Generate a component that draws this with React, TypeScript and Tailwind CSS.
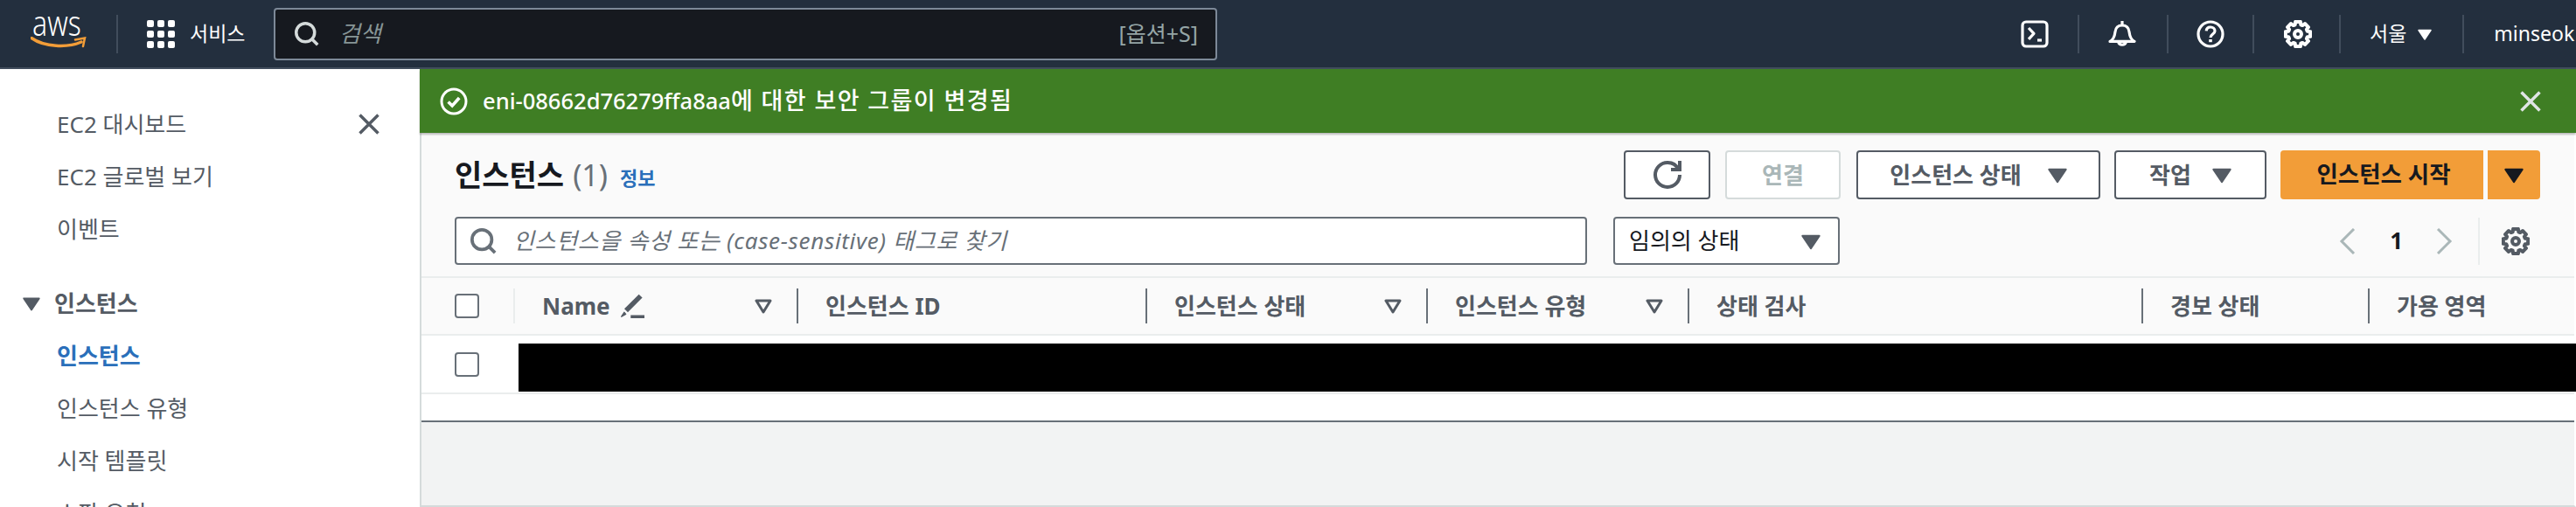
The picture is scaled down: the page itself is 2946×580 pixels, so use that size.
import type { ReactNode } from 'react';

const gearPath = (() => {
  // 8 chunky teeth round a 16 unit box
  const pts: string[] = [];
  for (let i = 0; i < 8; i++) {
    const a = (i * Math.PI) / 4 - Math.PI / 2;
    const step = [[-0.3, 5.6], [-0.2, 7.2], [0.2, 7.2], [0.3, 5.6]];
    step.forEach(([d, r]) => {
      pts.push(`${(8 + r * Math.cos(a + d)).toFixed(2)},${(8 + r * Math.sin(a + d)).toFixed(2)}`);
    });
  }
  return pts.join(' ');
})();

const Gear = ({ className }: { className: string }) => (
  <svg viewBox="0 0 16 16" className={className} fill="none" stroke="currentColor" strokeWidth="2" strokeLinejoin="round">
    <polygon points={gearPath} />
    <circle cx="8" cy="8" r="2" />
  </svg>
);

const Caret = ({ className }: { className: string }) => (
  <svg viewBox="0 0 16 16" className={className} fill="currentColor" stroke="currentColor" strokeWidth="1.5" strokeLinejoin="round">
    <polygon points="1,3.5 15,3.5 8,14" />
  </svg>
);

const SortCaret = () => (
  <svg viewBox="0 0 20 17" className="ml-auto mr-[28px] h-[17px] w-[20px] text-[#545b64]" fill="none" stroke="currentColor" strokeWidth="3" strokeLinejoin="round">
    <polygon points="2,2 18,2 10,15" />
  </svg>
);

const SearchIcon = ({ className }: { className: string }) => (
  <svg viewBox="0 0 16 16" className={className} fill="none" stroke="currentColor" strokeWidth="2">
    <circle cx="7" cy="7" r="6" />
    <path d="m11 11 4 4" />
  </svg>
);

const CloseIcon = ({ className }: { className: string }) => (
  <svg viewBox="0 0 16 16" className={className} fill="none" stroke="currentColor" strokeWidth="2">
    <path d="m2 2 12 12M14 2 2 14" />
  </svg>
);

const Checkbox = () => <div className="h-[28px] w-[28px] rounded-[4px] border-2 border-[#687078] bg-white" />;

const HeadDivider = ({ light }: { light?: boolean }) => (
  <div className={`h-[40px] w-[2px] shrink-0 ${light ? 'bg-[#eaeded]' : 'bg-[#687078]'}`} />
);

const HeadCell = ({ width, label, sort, light, children }: { width: string; label: string; sort?: boolean; light?: boolean; children?: ReactNode }) => (
  <div className={`flex h-full shrink-0 items-center ${width}`}>
    <HeadDivider light={light} />
    <span className="ml-[31px] whitespace-nowrap text-[26px] font-bold text-[#545b64]">{label}</span>
    {children}
    {sort && <SortCaret />}
  </div>
);

const NavItem = ({ label, active }: { label: string; active?: boolean }) => (
  <div className={`flex h-[60px] shrink-0 items-center pl-[65px] text-[26px] whitespace-nowrap ${active ? 'font-bold text-[#2a6fba]' : 'text-[#545b64]'}`}>
    {label}
  </div>
);

const HeaderDivider = () => <div className="h-[44px] w-[2px] shrink-0 bg-[#414d5c]" />;

const OutlineButton = ({ width, children }: { width: string; children: ReactNode }) => (
  <button className={`flex h-[56px] shrink-0 items-center justify-center rounded-[4px] border-2 border-[#545b64] bg-white text-[26px] font-bold text-[#545b64] ${width}`}>
    {children}
  </button>
);

export default function App() {
  return (
    <div className="flex h-[580px] w-[2946px] flex-col overflow-hidden bg-white font-['Noto_Sans','Noto_Sans_CJK_KR',sans-serif]">
      {/* Top nav */}
      <header className="flex h-[79px] shrink-0 items-center border-b-2 border-[#414d5c] bg-[#232f3e] text-white">
        <div className="flex h-full w-[133px] shrink-0 flex-col pl-[35px] pt-[9px]">
          <span className="ml-[2px] h-[33px] origin-left scale-x-[0.8] text-[40px] leading-[33px] font-light">aws</span>
          <svg viewBox="0 0 64 15" className="h-[15px] w-[64px]" fill="none" stroke="#f29d38" strokeLinecap="round">
            <path d="M1 1.500C16 12 42 13 58 6" strokeWidth="3.500" />
            <path d="M51 3.500 62 1.500 60 11" strokeWidth="2.500" />
          </svg>
        </div>
        <HeaderDivider />
        <div className="ml-[33px] grid h-[32px] w-[32px] shrink-0 grid-cols-3 gap-[4px]">
          {Array.from({ length: 9 }).map((_, i) => (
            <span key={i} className="rounded-[2px] bg-white" />
          ))}
        </div>
        <span className="ml-[17px] w-[61px] shrink-0 text-[23px] whitespace-nowrap">서비스</span>
        <div className="ml-[35px] flex h-[60px] w-[1079px] shrink-0 items-center rounded-[4px] border-2 border-[#7d8998] bg-[#16191f] pl-[22px] pr-[20px]">
          <SearchIcon className="h-[28px] w-[28px] text-[#d5dbdb]" />
          <span className="ml-[23px] text-[26px] text-[#879596] italic">검색</span>
          <span className="ml-auto text-[25px] text-[#95a5a6]">[옵션+S]</span>
        </div>
        <div className="ml-auto flex h-full w-[635px] shrink-0 items-center [&>*]:shrink-0">
          <svg viewBox="0 0 16 16" className="h-[32px] w-[32px]" fill="none" stroke="currentColor" strokeWidth="1.6" strokeLinejoin="round">
            <rect x="1" y="1" width="14" height="14" rx="2" />
            <path d="m4.500 4.500 3 3.200-3 3.200" />
            <path d="M9.500 11.500h2.500" />
          </svg>
          <div className="ml-[33px]"><HeaderDivider /></div>
          <svg viewBox="0 0 16 16" className="ml-[33px] h-[32px] w-[32px]" fill="none" stroke="currentColor" strokeWidth="1.6" strokeLinejoin="round">
            <path d="M1 12.200c2.200-1 2.700-3 3-5.500C4.300 4 6 3 8 3s3.700 1 4 3.700c.3 2.500.8 4.500 3 5.500z" />
            <path d="M8 .5V3" />
            <path d="M5.800 12.500a2.300 2.300 0 0 0 4.400 0" />
          </svg>
          <div className="ml-[35px]"><HeaderDivider /></div>
          <svg viewBox="0 0 16 16" className="ml-[32px] h-[32px] w-[32px]" fill="none" stroke="currentColor" strokeWidth="1.6">
            <circle cx="8" cy="8" r="7" />
            <path d="M5.600 6.200C5.700 4.800 6.700 4 8 4s2.500.9 2.500 2.200C10.500 8 8 8 8 10" />
            <path d="M8 11v1.600" strokeWidth="1.800" />
          </svg>
          <div className="ml-[32px]"><HeaderDivider /></div>
          <Gear className="ml-[34px] h-[32px] w-[32px]" />
          <div className="ml-[31px]"><HeaderDivider /></div>
          <span className="ml-[33px] text-[23px] whitespace-nowrap">서울</span>
          <Caret className="ml-[13px] h-[16px] w-[16px]" />
          <div className="ml-[35px]"><HeaderDivider /></div>
          <span className="ml-[34px] text-[23px] whitespace-nowrap">minseok</span>
        </div>
      </header>

      <div className="flex min-h-0 flex-1">
        {/* Side nav */}
        <aside className="flex w-[480px] shrink-0 flex-col bg-white pt-[33px]">
          <div className="flex items-center">
            <NavItem label="EC2 대시보드" />
            <CloseIcon className="ml-auto mr-[44px] h-[28px] w-[28px] text-[#545b64]" />
          </div>
          <NavItem label="EC2 글로벌 보기" />
          <NavItem label="이벤트" />
          <div className="mt-[25px] flex h-[60px] shrink-0 items-center pl-[26px] text-[26px] font-bold text-[#545b64]">
            <Caret className="h-[20px] w-[20px]" />
            <span className="ml-[16px]">인스턴스</span>
          </div>
          <NavItem label="인스턴스" active />
          <NavItem label="인스턴스 유형" />
          <NavItem label="시작 템플릿" />
          <NavItem label="스팟 요청" />
        </aside>

        {/* Content */}
        <main className="flex min-w-0 flex-1 flex-col">
          <div className="z-10 flex h-[73px] shrink-0 items-center bg-[#3f7e24] pl-[23px] pr-[38px] text-white shadow-[0_2px_2px_rgba(0,0,0,0.25)]">
            <svg viewBox="0 0 16 16" className="h-[32px] w-[32px]" fill="none" stroke="currentColor" strokeWidth="1.5">
              <circle cx="8" cy="8" r="7" />
              <path d="m4.800 8.200 2.300 2.300 4-4.500" strokeWidth="1.800" />
            </svg>
            <span className="ml-[17px] text-[25.5px] font-medium whitespace-nowrap">
              eni-08662d76279ffa8aa<span className="text-[27px] tracking-[1.4px]">에 대한 보안 그룹이 변경됨</span>
            </span>
            <CloseIcon className="ml-auto h-[28px] w-[28px] text-[#dfe5e5]" />
          </div>

          <div className="flex min-h-0 flex-1 flex-col border-b-2 border-l-2 border-r-2 border-[#d5dbdb] border-r-white bg-[#f2f3f3]">
            <section className="shrink-0 border-b-2 border-[#687078] bg-[#fafafa]">
              <div className="pl-[38px] pr-[39px] pt-[20px]">
                <div className="flex h-[56px] items-center">
                  <h1 className="text-[34px] font-bold whitespace-nowrap text-[#16191f]">인스턴스</h1>
                  <span className="ml-[10px] text-[34px] text-[#687078]">(1)</span>
                  <span className="ml-[14px] mt-[6px] text-[22px] font-bold text-[#2a6fba]">정보</span>
                  <OutlineButton width="ml-auto w-[99px]">
                    <svg viewBox="0 0 16 16" className="h-[32px] w-[32px]" fill="none" stroke="currentColor" strokeWidth="2">
                      <path d="M10 5h5V0" />
                      <path d="M15 8a6.957 6.957 0 0 1-7 7 6.957 6.957 0 0 1-7-7 6.957 6.957 0 0 1 7-7 6.870 6.870 0 0 1 6.300 4" />
                    </svg>
                  </OutlineButton>
                  <button className="ml-[17px] h-[56px] w-[132px] shrink-0 rounded-[4px] border-2 border-[#d5dbdb] bg-white text-[26px] font-bold text-[#aab7b8]">연결</button>
                  <OutlineButton width="ml-[18px] w-[279px]">
                    <span>인스턴스 상태</span>
                    <Caret className="ml-[30px] h-[22px] w-[22px]" />
                  </OutlineButton>
                  <OutlineButton width="ml-[16px] w-[174px]">
                    <span>작업</span>
                    <Caret className="ml-[24px] h-[22px] w-[22px]" />
                  </OutlineButton>
                  <button className="ml-[16px] h-[56px] w-[232px] shrink-0 rounded-l-[4px] bg-[#f29d38] pl-[4px] text-[26.500px] font-bold text-[#16191f]">인스턴스 시작</button>
                  <button className="ml-[5px] flex h-[56px] w-[60px] shrink-0 items-center justify-center rounded-r-[4px] bg-[#f29d38] text-[#16191f]">
                    <Caret className="h-[22px] w-[22px]" />
                  </button>
                </div>
                <div className="mt-[20px] flex h-[55px] items-center">
                  <div className="flex h-full w-[1295px] shrink-0 items-center rounded-[4px] border-2 border-[#687078] bg-white pl-[16px]">
                    <SearchIcon className="h-[30px] w-[30px] text-[#687078]" />
                    <span className="ml-[19px] text-[26px] tracking-[0.7px] whitespace-nowrap text-[#687078] italic">인스턴스을 속성 또는 (case-sensitive) 태그로 찾기</span>
                  </div>
                  <div className="ml-[30px] flex h-full w-[259px] shrink-0 items-center rounded-[4px] border-2 border-[#687078] bg-white pl-[16px] pr-[20px]">
                    <span className="text-[26px] whitespace-nowrap text-[#16191f]">임의의 상태</span>
                    <Caret className="ml-auto h-[22px] w-[22px] text-[#545b64]" />
                  </div>
                  <div className="ml-auto mr-[12px] flex h-full items-center">
                    <svg viewBox="0 0 19 30" className="h-[30px] w-[19px] text-[#aab7b8]" fill="none" stroke="currentColor" strokeWidth="3">
                      <path d="M17 1 3 15l14 14" />
                    </svg>
                    <span className="ml-[39px] text-[26px] font-bold text-[#16191f]">1</span>
                    <svg viewBox="0 0 19 30" className="ml-[38px] h-[30px] w-[19px] text-[#aab7b8]" fill="none" stroke="currentColor" strokeWidth="3">
                      <path d="m2 1 14 14L2 29" />
                    </svg>
                    <div className="ml-[29px] h-[54px] w-[2px] bg-[#eaeded]" />
                    <Gear className="ml-[25px] h-[32px] w-[32px] text-[#545b64]" />
                  </div>
                </div>
              </div>

              {/* Table */}
              <div className="mt-[13px] flex h-[68px] items-center border-y-2 border-[#eaeded] pr-0">
                <div className="flex w-[105px] shrink-0 pl-[38px]"><Checkbox /></div>
                <HeadCell width="w-[324px]" label="Name" sort light>
                  <svg viewBox="0 0 16 16" className="ml-[11px] h-[28px] w-[28px] text-[#545b64]" fill="none" stroke="currentColor" strokeLinejoin="round">
                    <path d="M13.500 1.500 4 11" strokeWidth="3.200" />
                    <path d="M2.800 12.200 1 15l2.800-1.600z" fill="currentColor" strokeWidth="0.800" />
                    <path d="M7 15h9" strokeWidth="2" />
                  </svg>
                </HeadCell>
                <HeadCell width="w-[399px]" label="인스턴스 ID" />
                <HeadCell width="w-[321px]" label="인스턴스 상태" sort />
                <HeadCell width="w-[299px]" label="인스턴스 유형" sort />
                <HeadCell width="w-[519px]" label="상태 검사" />
                <HeadCell width="w-[259px]" label="경보 상태" />
                <HeadCell width="w-[236px]" label="가용 영역" />
              </div>
              <div className="flex h-[67px] items-center border-b-2 border-[#eaeded] bg-white">
                <div className="flex w-[111px] shrink-0 pl-[38px]"><Checkbox /></div>
                <div className="-mr-[4px] mt-[8px] h-[55px] flex-1 bg-black" />
              </div>
              <div className="h-[30px] bg-white" />
            </section>
          </div>
        </main>
      </div>
    </div>
  );
}
